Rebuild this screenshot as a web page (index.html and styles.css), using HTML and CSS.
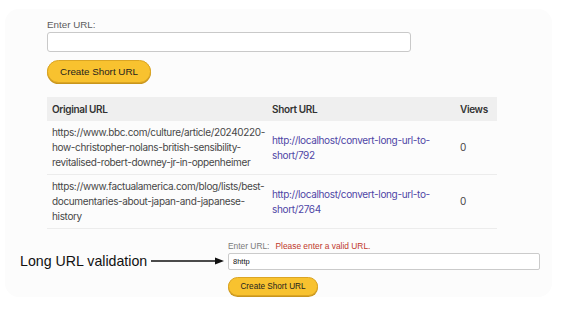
FILE: index.html
```
<!DOCTYPE html>
<html lang="en">
<head>
<meta charset="utf-8">
<title>URL Shortener</title>
<link rel="stylesheet" href="styles.css">
</head>
<body>
<div class="panel">
  <div class="main">
    <form class="url-form">
      <label class="label" for="url1">Enter URL:</label>
      <input id="url1" class="input" type="text">
      <button type="button" class="btn">Create Short URL</button>
    </form>
    <table class="urls">
      <colgroup>
        <col class="c1"><col class="c2"><col class="c3">
      </colgroup>
      <thead>
        <tr><th>Original URL</th><th>Short URL</th><th>Views</th></tr>
      </thead>
      <tbody>
        <tr>
          <td>https://www.bbc.com/culture/article/20240220-how-christopher-nolans-british-sensibility-revitalised-robert-downey-jr-in-oppenheimer</td>
          <td><a href="#">http://localhost/convert-long-url-to-short/792</a></td>
          <td>0</td>
        </tr>
        <tr>
          <td>https://www.factualamerica.com/blog/lists/best-documentaries-about-japan-and-japanese-history</td>
          <td><a href="#">http://localhost/convert-long-url-to-short/2764</a></td>
          <td>0</td>
        </tr>
      </tbody>
    </table>
  </div>
  <div class="demo">
    <div class="mini-label"><span>Enter URL:</span><span class="error">Please enter a valid URL.</span></div>
    <div class="annot">
      <span class="annot-text">Long URL validation</span>
      <svg class="arrow" width="74" height="10" viewBox="0 0 74 10">
        <line x1="0" y1="5" x2="66" y2="5" stroke="#111" stroke-width="1.3"/>
        <polygon points="64,1.5 73,5 64,8.5" fill="#111"/>
      </svg>
    </div>
    <input class="mini-input" type="text" value="8http">
    <button type="button" class="mini-btn">Create Short URL</button>
  </div>
</div>
</body>
</html>
```
FILE: styles.css
```
html, body {
  margin: 0;
  padding: 0;
  background: #ffffff;
}
body {
  font-family: "Liberation Sans", Arial, sans-serif;
}
.panel {
  margin: 9px 0 0 5px;
  width: 547px;
  height: 288px;
  background: #fcfcfc;
  border-radius: 14px;
  box-sizing: border-box;
  padding-top: 9px;
}
.main {
  padding-left: 42px;
}
.url-form {
  display: flex;
  flex-direction: column;
  align-items: flex-start;
  margin: 0;
}
.label {
  font-size: 9.8px;
  color: #5c5c5c;
  line-height: 14px;
}
.input {
  box-sizing: border-box;
  width: 364px;
  height: 20px;
  margin: 0;
  border: 1px solid #c9c9c9;
  border-radius: 3px;
  background: #fff;
}
.btn {
  margin-top: 8px;
  box-sizing: border-box;
  width: 104px;
  height: 23px;
  padding: 0;
  background: #f8c22f;
  border: 1px solid #dba523;
  border-radius: 12px;
  box-shadow: 0 1px 0 #c9961c;
  font-family: "Liberation Sans", Arial, sans-serif;
  font-size: 9.8px;
  color: #1e1e1e;
}
.urls {
  margin-top: 14px;
  width: 450px;
  border-collapse: collapse;
  table-layout: fixed;
  font-family: Inter, "Noto Sans", sans-serif;
  font-size: 10px;
  letter-spacing: -0.35px;
}
.c1 { width: 220px; }
.c2 { width: 188px; }
.c3 { width: 42px; }
.urls th {
  background: #efefef;
  height: 24px;
  padding: 0 5px;
  text-align: left;
  font-weight: 600;
  color: #333;
}
.urls td {
  padding: 4px 3px 4px 5px;
  line-height: 15px;
  color: #474747;
  border-bottom: 1px solid #ececec;
  vertical-align: middle;
}
.urls a {
  color: #4f46a6;
  text-decoration: none;
}
.demo {
  margin-top: 12px;
  display: grid;
  grid-template-columns: 208px 312px;
  padding-left: 15px;
}
.mini-label {
  grid-column: 2;
  font-size: 8.4px;
  color: #7a7a7a;
  line-height: 11px;
  display: flex;
  gap: 6px;
}
.error {
  color: #c0392b;
}
.annot {
  grid-column: 1;
  grid-row: 2;
  display: flex;
  align-items: center;
  gap: 4px;
}
.annot-text {
  font-size: 14.2px;
  color: #111;
}
.arrow {
  display: block;
}
.mini-input {
  grid-column: 2;
  grid-row: 2;
  box-sizing: border-box;
  width: 312px;
  height: 17px;
  margin: 1px 0 0;
  padding: 0 4px;
  border: 1px solid #cbcbcb;
  border-radius: 2px;
  background: #fff;
  font-family: "Liberation Sans", Arial, sans-serif;
  font-size: 7.5px;
  color: #111;
}
.mini-btn {
  grid-column: 2;
  grid-row: 3;
  justify-self: start;
  margin-top: 7px;
  box-sizing: border-box;
  width: 90px;
  height: 19px;
  padding: 0;
  background: #f8c22f;
  border: 1px solid #dba523;
  border-radius: 10px;
  box-shadow: 0 1px 0 #c9961c;
  font-family: "Liberation Sans", Arial, sans-serif;
  font-size: 8.2px;
  color: #1e1e1e;
}
```
